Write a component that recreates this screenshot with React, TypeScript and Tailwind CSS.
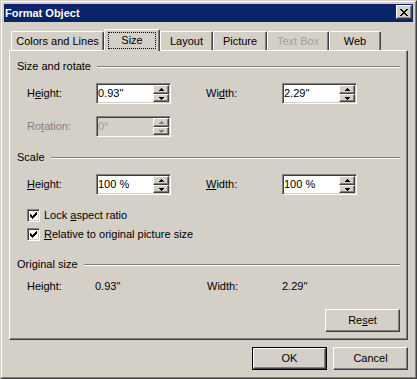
import React from 'react';

type TabDef = { label: string; w: string; active?: boolean; disabled?: boolean };

const tabs: TabDef[] = [
  { label: 'Colors and Lines', w: 'w-[93px]' },
  { label: 'Size', w: 'w-[56px]', active: true },
  { label: 'Layout', w: 'w-[53px]' },
  { label: 'Picture', w: 'w-[54px]' },
  { label: 'Text Box', w: 'w-[62px]', disabled: true },
  { label: 'Web', w: 'w-[52px]' },
];

// classic 3D edges
const raised =
  'border border-t-white border-l-white border-r-[#404040] border-b-[#404040] shadow-[inset_-1px_-1px_0_#808080]';
const sunken =
  'border border-t-[#808080] border-l-[#808080] border-r-white border-b-white shadow-[inset_1px_1px_0_#404040,inset_-1px_-1px_0_#d4d0c8]';

const Arrow = ({ up, disabled }: { up?: boolean; disabled?: boolean }) => (
  <svg width="5" height="3" viewBox="0 0 5 3" fill={disabled ? '#808080' : '#000'}>
    <path d={up ? 'M2 0h1v1h1v1h1v1H0V2h1V1h1z' : 'M0 0h5v1H4v1H3v1H2V2H1V1H0z'} />
  </svg>
);

const SpinBox = ({ value, disabled }: { value: string; disabled?: boolean }) => (
  <div className={`flex h-[21px] w-[75px] p-[1px] ${sunken} ${disabled ? 'bg-[#d4d0c8] text-[#9a9a9a]' : 'bg-white'}`}>
    <div className="flex-1 leading-[17px]">{value}</div>
    <div className="flex w-[16px] flex-col">
      <div className={`flex h-[9px] items-center justify-center bg-[#d4d0c8] ${raised}`}>
        <Arrow up disabled={disabled} />
      </div>
      <div className={`flex h-[8px] items-center justify-center bg-[#d4d0c8] ${raised}`}>
        <Arrow disabled={disabled} />
      </div>
    </div>
  </div>
);

const GroupHead = ({ title, className }: { title: string; className: string }) => (
  <div className={`flex h-[13px] items-center pl-[7px] pr-[7px] ${className}`}>
    <span className="whitespace-nowrap">{title}</span>
    <div className="ml-[6px] h-[2px] flex-1 border-t border-b border-t-[#808080] border-b-white" />
  </div>
);

const CheckBox = ({ children, className }: { children: React.ReactNode; className: string }) => (
  <div className={`flex h-[13px] items-center pl-[17px] ${className}`}>
    <div className={`flex h-[13px] w-[13px] items-center justify-center bg-white ${sunken}`}>
      <svg width="7" height="7" viewBox="0 0 7 7" fill="#000">
        <rect x="6" y="0" width="1" height="1" />
        <rect x="5" y="1" width="2" height="1" />
        <rect x="0" y="2" width="1" height="1" />
        <rect x="4" y="2" width="3" height="1" />
        <rect x="0" y="3" width="2" height="1" />
        <rect x="3" y="3" width="3" height="1" />
        <rect x="0" y="4" width="5" height="1" />
        <rect x="1" y="5" width="3" height="1" />
        <rect x="2" y="6" width="1" height="1" />
      </svg>
    </div>
    <span className="ml-[4px] whitespace-nowrap">{children}</span>
  </div>
);

const Button = ({ children, isDefault }: { children: React.ReactNode; isDefault?: boolean }) =>
  isDefault ? (
    <div className="h-[23px] w-[75px] border border-black">
      <div className="flex h-full w-full items-center justify-center border border-t-white border-l-white border-r-[#404040] border-b-[#404040] shadow-[inset_-1px_-1px_0_#808080]">
        {children}
      </div>
    </div>
  ) : (
    <div className={`flex h-[23px] w-[75px] items-center justify-center ${raised}`}>{children}</div>
  );

const CloseGlyph = () => (
  <svg width="8" height="7" viewBox="0 0 8 7" fill="#000">
    <path d="M0 0h2v1h1v1h2V1h1V0h2v1H7v1H6v1H5v1h1v1h1v1h1v1H6V6H5V5H3v1H2v1H0V6h1V5h1V4h1V3H2V2H1V1H0z" />
  </svg>
);

export default function App() {
  return (
    <div className="h-[379px] w-[417px] border border-t-[#d4d0c8] border-l-[#d4d0c8] border-r-[#404040] border-b-[#404040] bg-[#d4d0c8] font-['Liberation_Sans',Arial,sans-serif] text-[11px] leading-[13px] text-black">
      <div className="flex h-full flex-col border border-t-white border-l-white border-r-[#808080] border-b-[#808080] p-[2px]">
        {/* title bar */}
        <div className="flex h-[18px] items-start justify-between bg-[#0a246a] pl-[1px] pr-[1px]">
          <span className="mt-[3px] font-bold text-white">Format Object</span>
          <div className={`mt-[1px] flex h-[14px] w-[16px] items-center justify-center bg-[#d4d0c8] ${raised}`}>
            <CloseGlyph />
          </div>
        </div>

        {/* tabs */}
        <div className="ml-[7px] mt-[7px] flex h-[21px] items-end">
          {tabs.map((t) =>
            t.active ? (
              <div
                key={t.label}
                className={`relative z-10 h-[22px] self-start rounded-t-[2px] border-t border-l border-r border-t-white border-l-white border-r-[#404040] bg-[#d4d0c8] pl-[3px] pt-[2px] shadow-[inset_-1px_0_0_#808080] ${t.w}`}
              >
                <div className="flex h-[17px] w-[48px] items-center justify-center border border-dotted border-black">
                  {t.label}
                </div>
              </div>
            ) : (
              <div
                key={t.label}
                className={`flex h-[19px] justify-center rounded-t-[2px] border-t border-l border-r border-t-white border-l-white border-r-[#404040] pt-[3px] shadow-[inset_-1px_0_0_#808080] ${t.w} ${t.disabled ? 'text-[#a0a0a0]' : ''}`}
              >
                {t.label}
              </div>
            )
          )}
        </div>

        {/* tab panel */}
        <div className={`ml-[5px] flex h-[290px] w-[399px] flex-col ${raised}`}>
          <GroupHead title="Size and rotate" className="mt-[9px]" />
          <div className="mt-[10px] flex h-[21px] items-center pl-[17px]">
            <span className="w-[69px]">
              H<u>e</u>ight:
            </span>
            <SpinBox value={'0.93"'} />
            <span className="ml-[35px] w-[76px]">
              Wi<u>d</u>th:
            </span>
            <SpinBox value={'2.29"'} />
          </div>
          <div className="mt-[12px] flex h-[21px] items-center pl-[17px]">
            <span className="w-[69px] text-[#808080]">
              Ro<u>t</u>ation:
            </span>
            <SpinBox value="0°" disabled />
          </div>

          <GroupHead title="Scale" className="mt-[14px]" />
          <div className="mt-[10px] flex h-[21px] items-center pl-[17px]">
            <span className="w-[69px]">
              <u>H</u>eight:
            </span>
            <SpinBox value="100 %" />
            <span className="ml-[35px] w-[76px]">
              <u>W</u>idth:
            </span>
            <SpinBox value="100 %" />
          </div>
          <CheckBox className="mt-[14px]">
            Lock <u>a</u>spect ratio
          </CheckBox>
          <CheckBox className="mt-[6px]">
            <u>R</u>elative to original picture size
          </CheckBox>

          <GroupHead title="Original size" className="mt-[17px]" />
          <div className="mt-[9px] flex h-[13px] items-center pl-[17px]">
            <span className="w-[68px]">Height:</span>
            <span className="w-[112px]">0.93"</span>
            <span className="w-[75px]">Width:</span>
            <span>2.29"</span>
          </div>

          <div className="mt-[16px] flex justify-end pr-[7px]">
            <Button>
              Re<u>s</u>et
            </Button>
          </div>
        </div>

        {/* dialog buttons */}
        <div className="mt-[7px] flex justify-end gap-[6px] pr-[5px]">
          <Button isDefault>OK</Button>
          <Button>Cancel</Button>
        </div>
      </div>
    </div>
  );
}
